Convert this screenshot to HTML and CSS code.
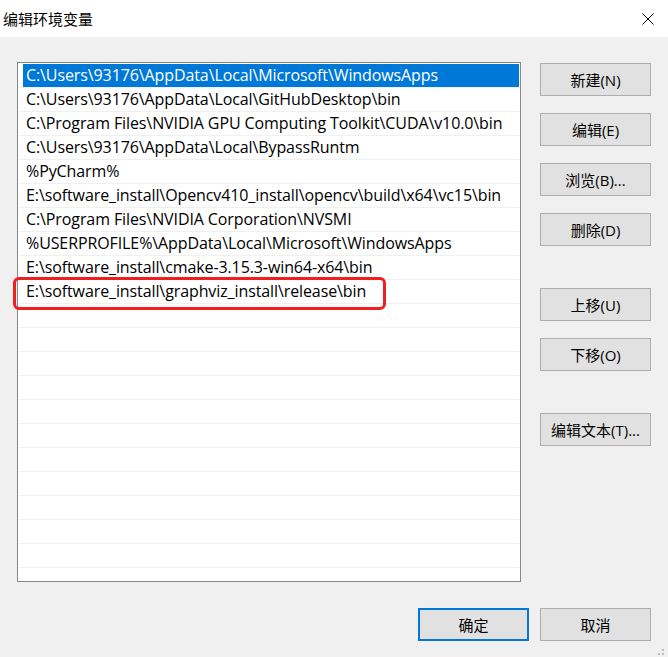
FILE: index.html
```html
<!DOCTYPE html>
<html lang="zh-CN">
<head>
<meta charset="utf-8">
<title>编辑环境变量</title>
<link rel="stylesheet" href="styles.css">
</head>
<body>
<div class="dialog">
  <div class="titlebar">
    <span class="title">编辑环境变量</span>
    <svg class="close" width="12" height="12" viewBox="0 0 12 12"><path d="M0.5 0.5 L11.5 11.5 M11.5 0.5 L0.5 11.5" stroke="#000" stroke-width="1" fill="none"/></svg>
  </div>
  <div class="content">
    <div class="main">
      <div class="list">
        <div class="rows">
          <div class="row selected"><span class="cell">C:\Users\93176\AppData\Local\Microsoft\WindowsApps</span></div>
          <div class="row"><span class="cell">C:\Users\93176\AppData\Local\GitHubDesktop\bin</span></div>
          <div class="row"><span class="cell">C:\Program Files\NVIDIA GPU Computing Toolkit\CUDA\v10.0\bin</span></div>
          <div class="row"><span class="cell">C:\Users\93176\AppData\Local\BypassRuntm</span></div>
          <div class="row"><span class="cell">%PyCharm%</span></div>
          <div class="row"><span class="cell">E:\software_install\Opencv410_install\opencv\build\x64\vc15\bin</span></div>
          <div class="row"><span class="cell">C:\Program Files\NVIDIA Corporation\NVSMI</span></div>
          <div class="row"><span class="cell">%USERPROFILE%\AppData\Local\Microsoft\WindowsApps</span></div>
          <div class="row"><span class="cell">E:\software_install\cmake-3.15.3-win64-x64\bin</span></div>
          <div class="row"><span class="cell">E:\software_install\graphviz_install\release\bin</span></div>
          <div class="row"></div>
          <div class="row"></div>
          <div class="row"></div>
          <div class="row"></div>
          <div class="row"></div>
          <div class="row"></div>
          <div class="row"></div>
          <div class="row"></div>
          <div class="row"></div>
          <div class="row"></div>
          <div class="row"></div>
          <div class="row"></div>
          <div class="row"></div>
        </div>
        <span class="mark"></span>
      </div>
      <div class="side">
        <button class="btn">新建(N)</button>
        <button class="btn gap-s">编辑(E)</button>
        <button class="btn gap-s">浏览(B)...</button>
        <button class="btn gap-s">删除(D)</button>
        <button class="btn gap-l">上移(U)</button>
        <button class="btn gap-s">下移(O)</button>
        <button class="btn gap-l">编辑文本(T)...</button>
      </div>
    </div>
    <div class="footer">
      <button class="btn default">确定</button>
      <button class="btn">取消</button>
    </div>
  </div>
  <svg class="grip" width="10" height="8" viewBox="0 0 10 8">
    <rect x="5" y="0" width="2" height="2" fill="#bcbcbc"/>
    <rect x="1" y="4" width="2" height="2" fill="#bcbcbc"/>
    <rect x="5" y="4" width="2" height="2" fill="#bcbcbc"/>
  </svg>
</div>
</body>
</html>
```

FILE: styles.css
```css
* { box-sizing: border-box; }
html, body {
  margin: 0;
  padding: 0;
  background: #f0f0f0;
}
body {
  font-family: "Open Sans", "Noto Sans CJK SC", sans-serif;
  font-size: 15px;
  color: #000;
}
.dialog {
  position: relative;
  width: 668px;
  height: 657px;
  overflow: hidden;
}
.titlebar {
  height: 37px;
  background: #fff;
  display: flex;
  align-items: center;
  justify-content: space-between;
  padding: 0 14px 0 3px;
}
.title {
  font-family: "Noto Sans CJK SC", sans-serif;
  font-size: 15px;
  line-height: 20px;
}
.close { display: block; }
.content {
  padding: 25px 17px 0 17px;
}
.main {
  display: flex;
  align-items: flex-start;
}
.list {
  position: relative;
  width: 504px;
  height: 520px;
  border: 1px solid #828790;
  background: #fff;
}
.rows {
  height: 100%;
  padding: 1px 1px 0 1px;
  overflow: hidden;
}
.row {
  height: 24px;
  border-bottom: 1px solid #f0f0f0;
  padding-left: 4px;
  display: flex;
}
.cell {
  flex: 1;
  height: 23px;
  line-height: 23px;
  padding-left: 3px;
  white-space: nowrap;
  font-size: 16px;
  letter-spacing: -0.1px;
}
.selected .cell {
  background: #0078d7;
  color: #fff;
}
.mark {
  position: absolute;
  left: -5px;
  top: 214px;
  width: 373px;
  height: 33px;
  border: 3px solid #f01e1e;
  border-radius: 6px;
}
.side {
  display: flex;
  flex-direction: column;
  margin-left: 19px;
  margin-top: 1px;
}
.btn {
  width: 111px;
  height: 33px;
  border: 1px solid #adadad;
  background: #e1e1e1;
  font-family: "Open Sans", "Noto Sans CJK SC", sans-serif;
  font-size: 15px;
  color: #000;
  padding: 0;
  margin: 0;
}
.gap-s { margin-top: 17px; }
.gap-l { margin-top: 42px; }
.footer {
  display: flex;
  justify-content: flex-end;
  gap: 11px;
  margin-top: 26px;
}
.default {
  border: 2px solid #0078d7;
}
.grip {
  position: absolute;
  right: 1px;
  bottom: 0;
}
```
